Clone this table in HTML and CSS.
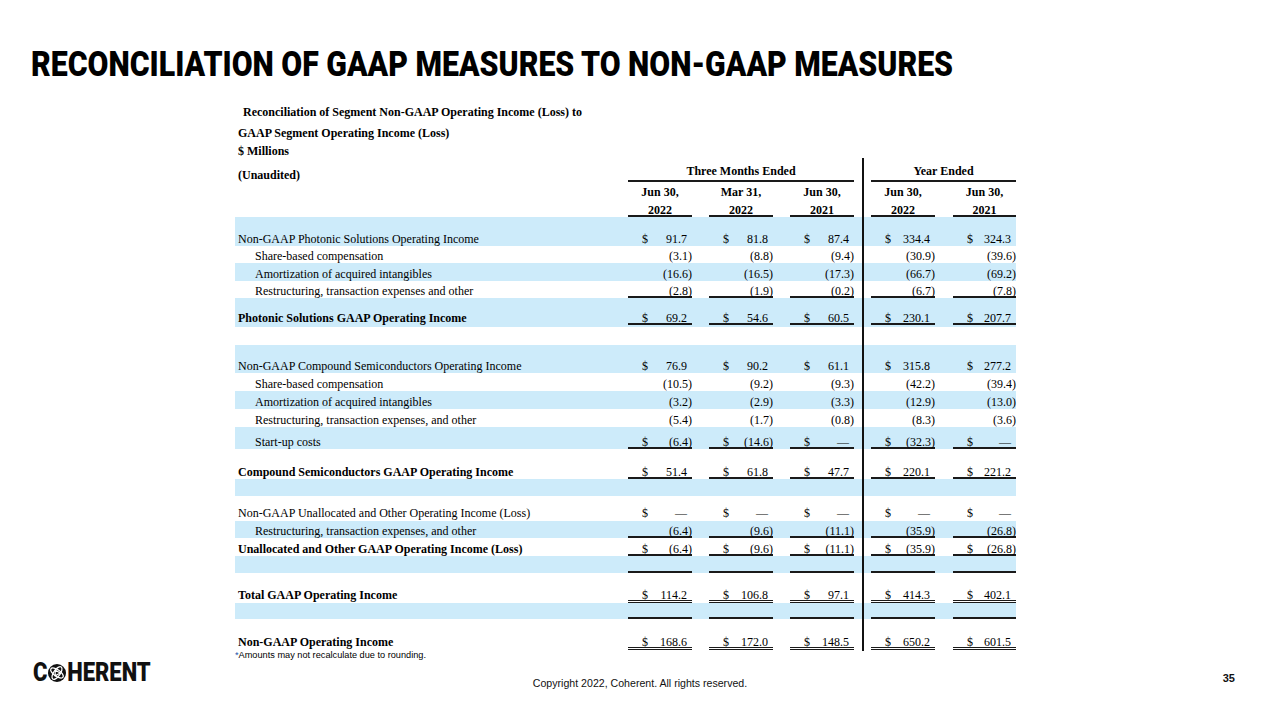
FILE: index.html
```html
<!DOCTYPE html>
<html lang="en">
<head>
<meta charset="utf-8">
<title>Reconciliation of GAAP Measures to Non-GAAP Measures</title>
<link rel="stylesheet" href="styles.css">
</head>
<body>
<div class="slide">
  <h1 class="title"><span>RECONCILIATION OF GAAP MEASURES TO NON-GAAP MEASURES</span></h1>

  <section class="report">
    <div class="cap cap1">Reconciliation of Segment Non-GAAP Operating Income (Loss) to</div>
    <div class="cap cap2">GAAP Segment Operating Income (Loss)</div>
    <div class="cap cap3">$ Millions</div>

    <div class="grid">
      <div class="row h24">
        <div class="c lab"><div class="t b">(Unaudited)</div></div>
        <div class="c c1 span3"><div class="t hd u top">Three Months Ended</div></div>
        <div class="c c4 span2"><div class="t hd u top">Year Ended</div></div>
      </div>
      <div class="row h17">
        <div class="c lab"></div>
        <div class="c c1"><div class="t hd">Jun 30,</div></div>
        <div class="c c2"><div class="t hd">Mar 31,</div></div>
        <div class="c c3"><div class="t hd">Jun 30,</div></div>
        <div class="c c4"><div class="t hd">Jun 30,</div></div>
        <div class="c c5"><div class="t hd">Jun 30,</div></div>
      </div>
      <div class="row h18">
        <div class="c lab"></div>
        <div class="c c1"><div class="t hd u">2022</div></div>
        <div class="c c2"><div class="t hd u">2022</div></div>
        <div class="c c3"><div class="t hd u">2021</div></div>
        <div class="c c4"><div class="t hd u">2022</div></div>
        <div class="c c5"><div class="t hd u">2021</div></div>
      </div>

      <!-- Photonic Solutions -->
      <div class="row h29 blue">
        <div class="c lab"><div class="t">Non-GAAP Photonic Solutions Operating Income</div></div>
        <div class="c c1"><div class="t v"><span>$</span><span class="n">91.7</span></div></div>
        <div class="c c2"><div class="t v"><span>$</span><span class="n">81.8</span></div></div>
        <div class="c c3"><div class="t v"><span>$</span><span class="n">87.4</span></div></div>
        <div class="c c4"><div class="t v"><span>$</span><span class="n">334.4</span></div></div>
        <div class="c c5"><div class="t v"><span>$</span><span class="n">324.3</span></div></div>
      </div>
      <div class="row h17">
        <div class="c lab ind"><div class="t">Share-based compensation</div></div>
        <div class="c c1"><div class="t v"><span class="n neg">(3.1)</span></div></div>
        <div class="c c2"><div class="t v"><span class="n neg">(8.8)</span></div></div>
        <div class="c c3"><div class="t v"><span class="n neg">(9.4)</span></div></div>
        <div class="c c4"><div class="t v"><span class="n neg">(30.9)</span></div></div>
        <div class="c c5"><div class="t v"><span class="n neg">(39.6)</span></div></div>
      </div>
      <div class="row h18 blue">
        <div class="c lab ind"><div class="t">Amortization of acquired intangibles</div></div>
        <div class="c c1"><div class="t v"><span class="n neg">(16.6)</span></div></div>
        <div class="c c2"><div class="t v"><span class="n neg">(16.5)</span></div></div>
        <div class="c c3"><div class="t v"><span class="n neg">(17.3)</span></div></div>
        <div class="c c4"><div class="t v"><span class="n neg">(66.7)</span></div></div>
        <div class="c c5"><div class="t v"><span class="n neg">(69.2)</span></div></div>
      </div>
      <div class="row h17">
        <div class="c lab ind"><div class="t">Restructuring, transaction expenses and other</div></div>
        <div class="c c1"><div class="t v u"><span class="n neg">(2.8)</span></div></div>
        <div class="c c2"><div class="t v u"><span class="n neg">(1.9)</span></div></div>
        <div class="c c3"><div class="t v u"><span class="n neg">(0.2)</span></div></div>
        <div class="c c4"><div class="t v u"><span class="n neg">(6.7)</span></div></div>
        <div class="c c5"><div class="t v u"><span class="n neg">(7.8)</span></div></div>
      </div>
      <div class="row h29 blue p2">
        <div class="c lab"><div class="t b">Photonic Solutions GAAP Operating Income</div></div>
        <div class="c c1"><div class="t v u"><span>$</span><span class="n">69.2</span></div></div>
        <div class="c c2"><div class="t v u"><span>$</span><span class="n">54.6</span></div></div>
        <div class="c c3"><div class="t v u"><span>$</span><span class="n">60.5</span></div></div>
        <div class="c c4"><div class="t v u"><span>$</span><span class="n">230.1</span></div></div>
        <div class="c c5"><div class="t v u"><span>$</span><span class="n">207.7</span></div></div>
      </div>
      <div class="row h18">
        <div class="c lab"></div>
        <div class="c c1"></div>
        <div class="c c2"></div>
        <div class="c c3"></div>
        <div class="c c4"></div>
        <div class="c c5"></div>
      </div>

      <!-- Compound Semiconductors -->
      <div class="row h28 blue">
        <div class="c lab"><div class="t">Non-GAAP Compound Semiconductors Operating Income</div></div>
        <div class="c c1"><div class="t v"><span>$</span><span class="n">76.9</span></div></div>
        <div class="c c2"><div class="t v"><span>$</span><span class="n">90.2</span></div></div>
        <div class="c c3"><div class="t v"><span>$</span><span class="n">61.1</span></div></div>
        <div class="c c4"><div class="t v"><span>$</span><span class="n">315.8</span></div></div>
        <div class="c c5"><div class="t v"><span>$</span><span class="n">277.2</span></div></div>
      </div>
      <div class="row h18">
        <div class="c lab ind"><div class="t">Share-based compensation</div></div>
        <div class="c c1"><div class="t v"><span class="n neg">(10.5)</span></div></div>
        <div class="c c2"><div class="t v"><span class="n neg">(9.2)</span></div></div>
        <div class="c c3"><div class="t v"><span class="n neg">(9.3)</span></div></div>
        <div class="c c4"><div class="t v"><span class="n neg">(42.2)</span></div></div>
        <div class="c c5"><div class="t v"><span class="n neg">(39.4)</span></div></div>
      </div>
      <div class="row h18 blue">
        <div class="c lab ind"><div class="t">Amortization of acquired intangibles</div></div>
        <div class="c c1"><div class="t v"><span class="n neg">(3.2)</span></div></div>
        <div class="c c2"><div class="t v"><span class="n neg">(2.9)</span></div></div>
        <div class="c c3"><div class="t v"><span class="n neg">(3.3)</span></div></div>
        <div class="c c4"><div class="t v"><span class="n neg">(12.9)</span></div></div>
        <div class="c c5"><div class="t v"><span class="n neg">(13.0)</span></div></div>
      </div>
      <div class="row h18">
        <div class="c lab ind"><div class="t">Restructuring, transaction expenses, and other</div></div>
        <div class="c c1"><div class="t v"><span class="n neg">(5.4)</span></div></div>
        <div class="c c2"><div class="t v"><span class="n neg">(1.7)</span></div></div>
        <div class="c c3"><div class="t v"><span class="n neg">(0.8)</span></div></div>
        <div class="c c4"><div class="t v"><span class="n neg">(8.3)</span></div></div>
        <div class="c c5"><div class="t v"><span class="n neg">(3.6)</span></div></div>
      </div>
      <div class="row h22 blue">
        <div class="c lab ind"><div class="t">Start-up costs</div></div>
        <div class="c c1"><div class="t v u"><span>$</span><span class="n neg">(6.4)</span></div></div>
        <div class="c c2"><div class="t v u"><span>$</span><span class="n neg">(14.6)</span></div></div>
        <div class="c c3"><div class="t v u"><span>$</span><span class="n">&mdash;</span></div></div>
        <div class="c c4"><div class="t v u"><span>$</span><span class="n neg">(32.3)</span></div></div>
        <div class="c c5"><div class="t v u"><span>$</span><span class="n">&mdash;</span></div></div>
      </div>
      <div class="row h30">
        <div class="c lab"><div class="t b">Compound Semiconductors GAAP Operating Income</div></div>
        <div class="c c1"><div class="t v u"><span>$</span><span class="n">51.4</span></div></div>
        <div class="c c2"><div class="t v u"><span>$</span><span class="n">61.8</span></div></div>
        <div class="c c3"><div class="t v u"><span>$</span><span class="n">47.7</span></div></div>
        <div class="c c4"><div class="t v u"><span>$</span><span class="n">220.1</span></div></div>
        <div class="c c5"><div class="t v u"><span>$</span><span class="n">221.2</span></div></div>
      </div>
      <div class="row h17 blue">
        <div class="c lab"></div>
        <div class="c c1"></div>
        <div class="c c2"></div>
        <div class="c c3"></div>
        <div class="c c4"></div>
        <div class="c c5"></div>
      </div>

      <!-- Unallocated and Other -->
      <div class="row h25 p1">
        <div class="c lab"><div class="t">Non-GAAP Unallocated and Other Operating Income (Loss)</div></div>
        <div class="c c1"><div class="t v"><span>$</span><span class="n">&mdash;</span></div></div>
        <div class="c c2"><div class="t v"><span>$</span><span class="n">&mdash;</span></div></div>
        <div class="c c3"><div class="t v"><span>$</span><span class="n">&mdash;</span></div></div>
        <div class="c c4"><div class="t v"><span>$</span><span class="n">&mdash;</span></div></div>
        <div class="c c5"><div class="t v"><span>$</span><span class="n">&mdash;</span></div></div>
      </div>
      <div class="row h17 blue">
        <div class="c lab ind"><div class="t">Restructuring, transaction expenses, and other</div></div>
        <div class="c c1"><div class="t v u"><span class="n neg">(6.4)</span></div></div>
        <div class="c c2"><div class="t v u"><span class="n neg">(9.6)</span></div></div>
        <div class="c c3"><div class="t v u"><span class="n neg">(11.1)</span></div></div>
        <div class="c c4"><div class="t v u"><span class="n neg">(35.9)</span></div></div>
        <div class="c c5"><div class="t v u"><span class="n neg">(26.8)</span></div></div>
      </div>
      <div class="row h18">
        <div class="c lab"><div class="t b">Unallocated and Other GAAP Operating Income (Loss)</div></div>
        <div class="c c1"><div class="t v u"><span>$</span><span class="n neg">(6.4)</span></div></div>
        <div class="c c2"><div class="t v u"><span>$</span><span class="n neg">(9.6)</span></div></div>
        <div class="c c3"><div class="t v u"><span>$</span><span class="n neg">(11.1)</span></div></div>
        <div class="c c4"><div class="t v u"><span>$</span><span class="n neg">(35.9)</span></div></div>
        <div class="c c5"><div class="t v u"><span>$</span><span class="n neg">(26.8)</span></div></div>
      </div>
      <div class="row h17 blue">
        <div class="c lab"></div>
        <div class="c c1"><div class="t u"></div></div>
        <div class="c c2"><div class="t u"></div></div>
        <div class="c c3"><div class="t u"></div></div>
        <div class="c c4"><div class="t u"></div></div>
        <div class="c c5"><div class="t u"></div></div>
      </div>

      <!-- Totals -->
      <div class="row h30 dbl">
        <div class="c lab"><div class="t b">Total GAAP Operating Income</div></div>
        <div class="c c1"><div class="t v u"><span>$</span><span class="n">114.2</span></div></div>
        <div class="c c2"><div class="t v u"><span>$</span><span class="n">106.8</span></div></div>
        <div class="c c3"><div class="t v u"><span>$</span><span class="n">97.1</span></div></div>
        <div class="c c4"><div class="t v u"><span>$</span><span class="n">414.3</span></div></div>
        <div class="c c5"><div class="t v u"><span>$</span><span class="n">402.1</span></div></div>
      </div>
      <div class="row h16 blue">
        <div class="c lab"></div>
        <div class="c c1"><div class="t u"></div></div>
        <div class="c c2"><div class="t u"></div></div>
        <div class="c c3"><div class="t u"></div></div>
        <div class="c c4"><div class="t u"></div></div>
        <div class="c c5"><div class="t u"></div></div>
      </div>
      <div class="row h32 dbl p1">
        <div class="c lab"><div class="t b">Non-GAAP Operating Income</div></div>
        <div class="c c1"><div class="t v u"><span>$</span><span class="n">168.6</span></div></div>
        <div class="c c2"><div class="t v u"><span>$</span><span class="n">172.0</span></div></div>
        <div class="c c3"><div class="t v u"><span>$</span><span class="n">148.5</span></div></div>
        <div class="c c4"><div class="t v u"><span>$</span><span class="n">650.2</span></div></div>
        <div class="c c5"><div class="t v u"><span>$</span><span class="n">601.5</span></div></div>
      </div>
    </div>

    <p class="footnote"><span class="ast">*</span>Amounts may not recalculate due to rounding.</p>
  </section>

  <footer class="footer">
    <div class="logo">
      <span>C</span>
      <svg class="logo-mark" viewBox="0 0 20 20" preserveAspectRatio="none" aria-hidden="true">
        <circle cx="10" cy="10" r="10" fill="#111"/>
        <g fill="none" stroke="#fff" stroke-width="1.4">
          <ellipse cx="10" cy="10" rx="8.2" ry="3.6" transform="rotate(35 10 10)"/>
          <ellipse cx="10" cy="10" rx="8.2" ry="3.6" transform="rotate(-55 10 10)"/>
        </g>
        <path d="M8 6.8 L13.6 10 L8 13.2 Z" fill="none" stroke="#fff" stroke-width="1.3" stroke-linejoin="round"/>
      </svg>
      <span>HERENT</span>
    </div>
    <div class="copyright">Copyright 2022, Coherent. All rights reserved.</div>
    <div class="pageno">35</div>
  </footer>
</div>
</body>
</html>
```

FILE: styles.css
```css
* { box-sizing: border-box; }

html, body {
  margin: 0;
  padding: 0;
  background: #ffffff;
}

body {
  width: 1280px;
  height: 720px;
  overflow: hidden;
  font-family: "Liberation Serif", "Times New Roman", serif;
  color: #000;
}

.slide {
  width: 1280px;
  height: 720px;
  overflow: hidden;
}

/* ---------- Title ---------- */
.title {
  margin: 0;
  padding: 47px 0 0 31px;
  height: 82px;
  font-family: Roboto, "Liberation Sans", sans-serif;
  font-weight: 900;
  font-size: 35px;
  line-height: 35px;
  color: #000;
}

.title span {
  display: inline-block;
  white-space: nowrap;
  transform: scaleX(0.865);
  transform-origin: 0 0;
}

/* ---------- Report ---------- */
.report {
  margin-top: 20px;
  padding-left: 235px;
}

.cap {
  font-weight: 700;
  font-size: 12px;
  padding-left: 3px;
  white-space: nowrap;
}

.cap1 { line-height: 21px; height: 21px; padding-left: 8px; }
.cap2 { line-height: 21px; height: 21px; }
.cap3 { line-height: 14px; height: 14px; }

.grid { width: 781px; }

.row {
  display: grid;
  grid-template-columns: 393px 64px 81px 89px 73px 81px;
  font-size: 12px;
}

.row.blue { background: #cdebfa; }

.h16 { height: 16px; }
.h17 { height: 17px; }
.h18 { height: 18px; }
.h22 { height: 22px; }
.h24 { height: 24px; }
.h25 { height: 25px; }
.h28 { height: 28px; }
.h29 { height: 29px; }
.h30 { height: 30px; }
.h32 { height: 32px; }

.c {
  display: flex;
  flex-direction: column;
  justify-content: flex-end;
  min-width: 0;
}

.p1 > .c { padding-bottom: 1px; }
.p2 > .c { padding-bottom: 2px; }

.c2 { padding-left: 17px; }
.c3 { padding-left: 17px; padding-right: 8px; }
.c4 { border-left: 2px solid #111; padding-left: 7px; }
.c5 { padding-left: 18px; }

.span3 { grid-column: span 3; padding-right: 8px; }
.span2 { grid-column: span 2; }

.lab { padding-left: 3px; }
.lab.ind { padding-left: 20px; }

.b { font-weight: 700; }

.t {
  line-height: 9px;
  border-bottom: 2px solid transparent;
  white-space: nowrap;
}

.row.dbl .t { border-bottom: 3px double transparent; }

.row .t.u,
.row.dbl .t.u { border-bottom-color: #1a1a1a; }

.hd {
  text-align: center;
  font-weight: 700;
}

.hd.top { padding-bottom: 4px; }

.v {
  display: flex;
  padding-left: 14px;
}

.v .n {
  margin-left: auto;
  padding-right: 5px;
}

.v .n.neg { padding-right: 0; }

.footnote {
  margin: 0;
  height: 8px;
  font-family: "Liberation Sans", Arial, sans-serif;
  font-size: 9.2px;
  line-height: 8px;
  white-space: nowrap;
}

.footnote .ast { color: #2250a8; }

/* ---------- Footer ---------- */
.footer {
  display: grid;
  grid-template-columns: 1fr auto 1fr;
  align-items: start;
}

.logo {
  margin: 5px 0 0 33px;
  height: 18px;
  display: flex;
  align-items: center;
  font-family: Roboto, "Liberation Sans", sans-serif;
  font-weight: 900;
  font-size: 25px;
  line-height: 18px;
  color: #111;
  transform: scaleX(0.88);
  transform-origin: 0 0;
  white-space: nowrap;
}

.logo-mark {
  width: 20.5px;
  height: 18px;
  margin: 0 1px 0 1px;
  flex: none;
}

.copyright {
  margin-top: 18px;
  font-family: "Liberation Sans", Arial, sans-serif;
  font-size: 10.6px;
  line-height: 12px;
  color: #111;
  white-space: nowrap;
}

.pageno {
  justify-self: end;
  margin: 13px 45px 0 0;
  font-family: "Liberation Sans", Arial, sans-serif;
  font-weight: 700;
  font-size: 11px;
  line-height: 12px;
  color: #111;
}
```
